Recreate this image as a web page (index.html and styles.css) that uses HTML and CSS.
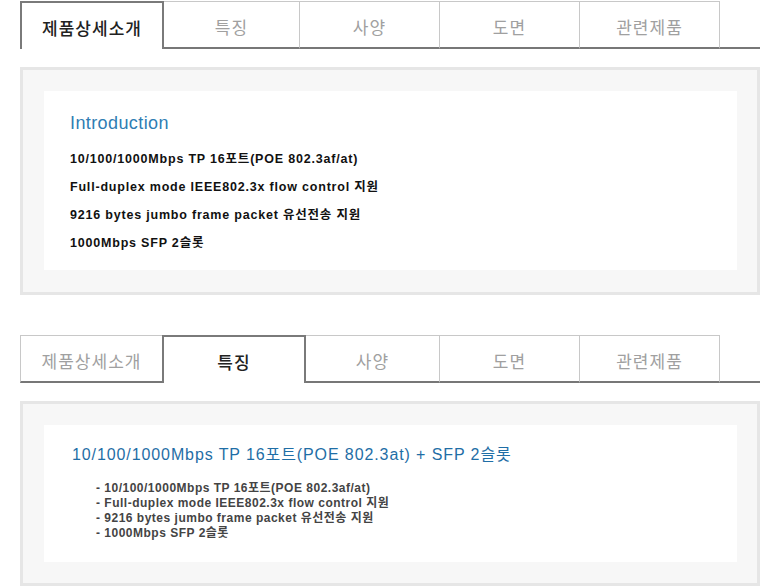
FILE: index.html
```html
<!DOCTYPE html>
<html lang="ko">
<head>
<meta charset="utf-8">
<link rel="stylesheet" href="styles.css">
</head>
<body>
<div class="page">
  <section class="sec sec-1">
    <ul class="tabs">
      <li class="tab t1 active">제품상세소개</li>
      <li class="tab t2">특징</li>
      <li class="tab t3">사양</li>
      <li class="tab t4">도면</li>
      <li class="tab t5">관련제품</li>
      <li class="tab-fill"></li>
    </ul>
    <div class="box box-1">
      <div class="inner">
        <h2 class="intro-title">Introduction</h2>
        <p class="intro-line">10/100/1000Mbps TP 16포트(POE 802.3af/at)</p>
        <p class="intro-line">Full-duplex mode IEEE802.3x flow control 지원</p>
        <p class="intro-line">9216 bytes jumbo frame packet 유선전송 지원</p>
        <p class="intro-line">1000Mbps SFP 2슬롯</p>
      </div>
    </div>
  </section>

  <section class="sec sec-2">
    <ul class="tabs">
      <li class="tab t1">제품상세소개</li>
      <li class="tab t2 active">특징</li>
      <li class="tab t3">사양</li>
      <li class="tab t4">도면</li>
      <li class="tab t5">관련제품</li>
      <li class="tab-fill"></li>
    </ul>
    <div class="box box-2">
      <div class="inner">
        <h2 class="feat-title">10/100/1000Mbps TP 16포트(POE 802.3at) + SFP 2슬롯</h2>
        <ul class="feat-list">
          <li>- 10/100/1000Mbps TP 16포트(POE 802.3af/at)</li>
          <li>- Full-duplex mode IEEE802.3x flow control 지원</li>
          <li>- 9216 bytes jumbo frame packet 유선전송 지원</li>
          <li>- 1000Mbps SFP 2슬롯</li>
        </ul>
      </div>
    </div>
  </section>
</div>
</body>
</html>
```

FILE: styles.css
```css
* { box-sizing: border-box; }
html, body { margin: 0; padding: 0; background: #fff; }
body {
  font-family: "Liberation Sans", "Noto Sans CJK KR", sans-serif;
  color: #111;
}
.page { padding: 1px 20px 0 20px; width: 780px; }

.tabs {
  list-style: none;
  margin: 0;
  padding: 0;
  display: flex;
  height: 48px;
}
.tab {
  height: 48px;
  display: flex;
  align-items: center;
  justify-content: center;
  padding-top: 3px;
  font-family: "Noto Sans CJK KR", sans-serif;
  font-size: 17px;
  letter-spacing: 1px;
  color: #a0a0a0;
  background: #fff;
  border-top: 1px solid #c8c8c8;
  border-right: 1px solid #c8c8c8;
  border-bottom: 2px solid #777;
}
.tab.active {
  color: #222;
  font-weight: 500;
  border: 2px solid #7a7a7a;
  border-bottom: none;
}
.tab-fill {
  flex: 1;
  border-bottom: 2px solid #777;
}

/* section 1 widths */
.sec-1 .t1 { width: 144px; }
.sec-1 .t2 { width: 136px; }
.sec-1 .t3, .sec-1 .t4, .sec-1 .t5 { width: 140px; }

/* section 2 widths */
.sec-2 .t1 { width: 142px; border-left: 1px solid #c8c8c8; border-right: none; }
.sec-2 .t2 { width: 144px; }
.sec-2 .t3 { width: 134px; }
.sec-2 .t4, .sec-2 .t5 { width: 140px; }

.box {
  margin-top: 18px;
  background: #f7f7f7;
  border: 3px solid #e6e6e6;
  padding: 21px 20px 22px 21px;
}
.inner { background: #fff; }

.box-1 .inner { height: 179px; padding: 21px 26px 0 26px; }
.intro-title {
  margin: 0 0 10px 0;
  font-family: "Liberation Sans", "Noto Sans CJK KR", sans-serif;
  font-size: 18px;
  font-weight: normal;
  color: #2f7db3;
  line-height: 23px;
  letter-spacing: 0.4px;
}
.intro-line {
  margin: 0;
  font-size: 12.5px;
  font-weight: bold;
  line-height: 28px;
  color: #111;
  letter-spacing: 0.8px;
}

.sec-2 { margin-top: 40px; }
.box-2 { margin-top: 18px; padding-bottom: 21px; }
.box-2 .inner { height: 137px; padding: 19px 28px 0 28px; }
.feat-title {
  margin: 0 0 15px 0;
  font-size: 16px;
  font-weight: normal;
  color: #1f6ea6;
  line-height: 22px;
  letter-spacing: 0.9px;
}
.feat-list {
  list-style: none;
  margin: 0;
  padding: 0 0 0 24px;
}
.feat-list li {
  font-size: 12px;
  font-weight: bold;
  line-height: 15px;
  color: #444;
  letter-spacing: 0.5px;
}
```
